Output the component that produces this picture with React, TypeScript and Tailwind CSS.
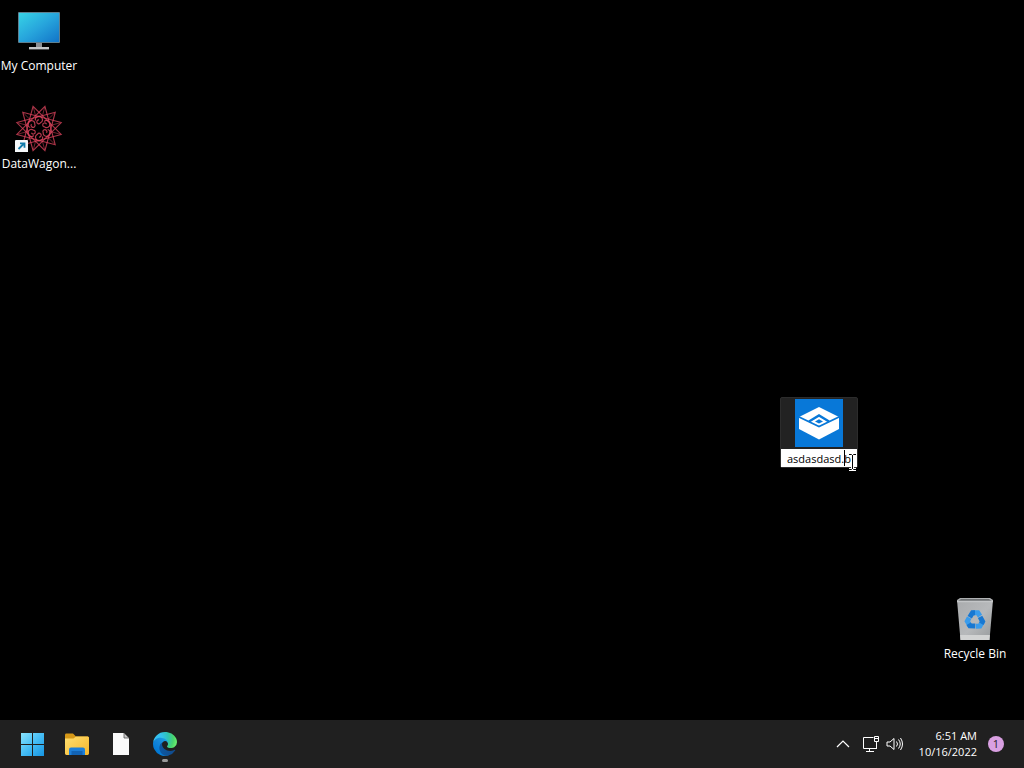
import React from "react";

function ComputerIcon() {
  return (
    <svg viewBox="0 0 48 48" className="size-12" aria-hidden="true">
      <defs>
        <linearGradient id="screen" x1="0" y1="0" x2="1" y2="1">
          <stop offset="0" stopColor="#37d3e6" />
          <stop offset="0.5" stopColor="#27a5dc" />
          <stop offset="1" stopColor="#1274c8" />
        </linearGradient>
      </defs>
      <path d="M21 37h6v5h-6z" fill="#8b8e92" />
      <path d="M14 41h20v2.4H14z" fill="#c3c5c7" />
      <rect x="3" y="6" width="42" height="31" rx="1" fill="#5f7f8f" />
      <rect x="4" y="7" width="40" height="29" fill="url(#screen)" />
    </svg>
  );
}

const SPOKES = Array.from({ length: 12 }, (_, i) => i * 30);

function MandalaIcon() {
  return (
    <svg viewBox="0 0 48 48" className="size-12" aria-hidden="true">
      <g fill="none" stroke="#e0465f">
        {[15, 45, 75, 105].map((a) => (
          <path
            key={a}
            d="M24 1.500 43.900 36H4.100z"
            transform={`rotate(${a} 24 24.500)`}
            strokeWidth="1.1"
            opacity="0.75"
          />
        ))}
        {SPOKES.map((a) => (
          <path key={a} d="M24 2.500V13" transform={`rotate(${a + 15} 24 24.500)`} strokeWidth="0.9" opacity="0.5" />
        ))}
        {SPOKES.filter((a) => a % 60 === 0).map((a) => (
          <g key={a} transform={`rotate(${a} 24 24.500)`} opacity="0.8">
            <path d="M20.500 16.500a3.500 3.500 0 1 1 5 2.300a2 2 0 1 1-1.500-3" strokeWidth="1.200" />
          </g>
        ))}
      </g>
      <rect x="0" y="36" width="13" height="13" rx="1" fill="#f5f8fa" />
      <path d="M3.5 45 9 39.5M5 39.3h4.500v4.500" fill="none" stroke="#127cab" strokeWidth="1.8" />
    </svg>
  );
}

function SandboxIcon() {
  return (
    <svg viewBox="0 0 48 48" className="size-12" aria-hidden="true">
      <path d="M0 0h48v48H0z" fill="#0878d8" />
      <path d="M24 8 44 18v12L24 40.500 4 30V18z" fill="#fff" />
      <path d="M3 17.500 24 27.500 45 17.500" fill="none" stroke="#0878d8" strokeWidth="1.800" />
      <path d="M14 22.500 24 16.500l10 6" fill="none" stroke="#0878d8" strokeWidth="2.400" />
      <path d="M24 18.700 31 22.500 24 26 17 22.500z" fill="#fff" />
      <path d="M24 20.300 28 22.500 24 24.600 20 22.500z" fill="#0878d8" />
    </svg>
  );
}

function RecycleIcon() {
  return (
    <svg viewBox="0 0 48 48" className="size-12" aria-hidden="true">
      <defs>
        <linearGradient id="bin" x1="0" y1="0" x2="1" y2="1">
          <stop offset="0" stopColor="#a9abad" />
          <stop offset="0.55" stopColor="#b7b9bb" />
          <stop offset="1" stopColor="#96999b" />
        </linearGradient>
      </defs>
      <path d="M6 6 9 4h30l3 2-3.5 40h-29z" fill="url(#bin)" />
      <path d="M6.8 7.2 10 5h28l3.2 2.2z" fill="#6f7274" />
      <path d="M6 6.8h36v1.400H6z" fill="#c4c6c8" />
      <path d="M9.1 41h29.8l-.4 5h-29z" fill="#d2d3d3" />
      <g transform="translate(24 26)" fill="none" strokeWidth="5">
        {[0, 120, 240].map((a) => (
          <g key={a} transform={`rotate(${a})`}>
            <path d="M-2.500-7.300H2.800L5-3.800" stroke="#3a9cec" />
            <path d="M-5.300-2.800-2.500-7.300H0" stroke="#1878d2" />
          </g>
        ))}
      </g>
    </svg>
  );
}

function StartIcon() {
  return (
    <svg viewBox="0 0 24 24" className="size-6" aria-hidden="true">
      <defs>
        <linearGradient id="start" gradientUnits="userSpaceOnUse" x1="0" y1="0" x2="24" y2="24">
          <stop offset="0" stopColor="#8ce6ff" />
          <stop offset="0.5" stopColor="#45bdf5" />
          <stop offset="1" stopColor="#1493e2" />
        </linearGradient>
      </defs>
      <path d="M0 1h11v11H0zM12 1h11v11H12zM0 13h11v11H0zM12 13h11v11H12z" fill="url(#start)" />
    </svg>
  );
}

function FolderIcon() {
  return (
    <svg viewBox="0 0 26 26" className="size-6.5" aria-hidden="true">
      <defs>
        <linearGradient id="folder" x1="0" y1="0" x2="1" y2="1">
          <stop offset="0" stopColor="#ffdf70" />
          <stop offset="1" stopColor="#f6b62b" />
        </linearGradient>
      </defs>
      <path d="M1 4a1.4 1.4 0 0 1 1.4-1.4H9L12 5.5h11.5A1.4 1.4 0 0 1 25 7v5H1z" fill="#d69817" />
      <path d="M1 7.500h8.500L12 5.500h11.600A1.4 1.4 0 0 1 25 7v15.600a1.4 1.4 0 0 1-1.4 1.4H2.400A1.4 1.4 0 0 1 1 22.600z" fill="url(#folder)" />
      <path d="M5 24v-5.500a2 2 0 0 1 2-2h12a2 2 0 0 1 2 2V24z" fill="#1d7fd8" />
      <path d="M7.500 20h11v4h-11z" fill="#1263b4" />
    </svg>
  );
}

function PageIcon() {
  return (
    <svg viewBox="0 0 24 24" className="size-6" aria-hidden="true">
      <path d="M4 1h11l5 5v17H4z" fill="#fafafa" />
      <path d="M15 1v5h5z" fill="#c9c9c9" stroke="#555" strokeWidth="0.8" />
    </svg>
  );
}

function EdgeIcon() {
  return (
    <svg viewBox="0 0 256 256" className="size-6" aria-hidden="true">
      <defs>
        <linearGradient id="edge-a" x1="63" y1="178" x2="241" y2="178" gradientUnits="userSpaceOnUse">
          <stop offset="0" stopColor="#0c59a4" />
          <stop offset="1" stopColor="#114a8b" />
        </linearGradient>
        <linearGradient id="edge-b" x1="158" y1="100" x2="46" y2="222" gradientUnits="userSpaceOnUse">
          <stop offset="0" stopColor="#1b9de2" />
          <stop offset="0.45" stopColor="#1586d8" />
          <stop offset="1" stopColor="#0078d4" />
        </linearGradient>
        <radialGradient id="edge-c" cx="30" cy="68" r="225" gradientUnits="userSpaceOnUse">
          <stop offset="0" stopColor="#35c1f1" />
          <stop offset="0.3" stopColor="#34c1ed" />
          <stop offset="0.6" stopColor="#2fc2b5" />
          <stop offset="0.85" stopColor="#47d36e" />
          <stop offset="1" stopColor="#66eb6e" />
        </radialGradient>
      </defs>
      <g transform="translate(-4.63 -4.92)">
        <path fill="url(#edge-a)" d="M235.68 195.46a93.73 93.73 0 0 1-10.54 4.71 101.87 101.87 0 0 1-35.9 6.46c-47.32 0-88.54-32.55-88.54-74.32A31.48 31.48 0 0 1 117.13 105c-42.8 1.8-53.8 46.4-53.8 72.53 0 73.88 68.09 81.37 82.76 81.37 7.91 0 19.84-2.3 27-4.56l1.31-.44a128.34 128.34 0 0 0 66.6-52.8 4 4 0 0 0-5.32-5.64z" />
        <path fill="url(#edge-b)" d="M110.34 246.34A79.2 79.2 0 0 1 87.6 225a80.72 80.72 0 0 1 29.53-120c3.12-1.47 8.45-4.13 15.54-4a32.35 32.35 0 0 1 25.69 13 31.88 31.88 0 0 1 6.36 18.66c0-.21 24.46-79.6-80-79.6-43.9 0-80 41.66-80 78.21a130.15 130.15 0 0 0 12.11 56 128 128 0 0 0 156.38 67.11 75.55 75.55 0 0 1-62.78-8z" />
        <path fill="url(#edge-c)" d="M156.94 153.78c-.81 1.05-3.3 2.5-3.3 5.66 0 2.61 1.7 5.12 4.72 7.23 14.38 10 41.49 8.68 41.56 8.68a59.56 59.56 0 0 0 30.27-8.35 61.38 61.38 0 0 0 30.43-52.88c.26-22.41-8-37.31-11.34-43.91C228.09 28.76 182.35 4.92 132.61 4.92a128 128 0 0 0-128 126.2c.48-36.54 36.8-66.05 80-66.05 3.5 0 23.46.34 42 10.07 16.34 8.58 24.9 18.94 30.85 29.21 6.18 10.67 7.28 24.15 7.28 29.52s-2.74 13.33-7.8 19.91z" />
      </g>
    </svg>
  );
}

function DesktopIcon({ label, place, children }: { label: string; place: string; children: React.ReactNode }) {
  return (
    <button type="button" className={`absolute flex w-[78px] flex-col items-center pt-0.5 text-xs text-white ${place}`}>
      {children}
      <span className="mt-1 whitespace-nowrap leading-4">{label}</span>
    </button>
  );
}

function TaskButton({ label, running, children }: { label: string; running?: boolean; children: React.ReactNode }) {
  return (
    <button type="button" aria-label={label} className="relative flex h-12 w-11 items-center justify-center">
      {children}
      {running && <span className="absolute bottom-1.5 h-[3px] w-1.5 rounded-full bg-[#9a9a9a]" />}
    </button>
  );
}

export default function App() {
  const [name, setName] = React.useState("asdasdasd.b");
  return (
    <div className="flex min-h-screen flex-col overflow-hidden bg-black font-['Open_Sans','Noto_Sans',sans-serif]">
      <main className="relative flex-1">
        <DesktopIcon label="My Computer" place="left-0 top-1">
          <ComputerIcon />
        </DesktopIcon>
        <DesktopIcon label="DataWagon..." place="left-0 top-[102px]">
          <MandalaIcon />
        </DesktopIcon>
        <div className="absolute left-[780px] top-[397px] flex w-[78px] flex-col items-center rounded-xs border border-[#2c2c2c] bg-[#222] pt-px">
          <SandboxIcon />
          <input
            aria-label="File name"
            value={name}
            onChange={(e) => setName(e.target.value)}
            className="mt-0.5 h-[18px] w-full bg-white pl-1.5 text-[11px] text-black outline-none"
          />
          <span className="absolute bottom-px left-[63px] h-4 w-px bg-black" />
          <svg viewBox="0 0 9 18" className="absolute -bottom-1 left-[67px] h-[18px] w-[9px]" aria-hidden="true">
            <path d="M1 1.500h2.500l1 1 1-1H8M4.500 2v14M1 16.500h2.500l1-1 1 1H8" fill="none" stroke="#fff" strokeWidth="3" />
            <path d="M1 1.500h2.500l1 1 1-1H8M4.500 2v14M1 16.500h2.500l1-1 1 1H8" fill="none" stroke="#000" />
          </svg>
        </div>
        <DesktopIcon label="Recycle Bin" place="bottom-[58px] right-[10px]">
          <RecycleIcon />
        </DesktopIcon>
      </main>

      <footer className="flex h-12 items-center justify-between bg-[#202020] pl-[11px] pr-5 text-white">
        <nav aria-label="Taskbar" className="flex">
          <TaskButton label="Start"><StartIcon /></TaskButton>
          <TaskButton label="File Explorer"><FolderIcon /></TaskButton>
          <TaskButton label="Document"><PageIcon /></TaskButton>
          <TaskButton label="Microsoft Edge" running><EdgeIcon /></TaskButton>
        </nav>
        <div className="flex items-center">
          <button type="button" aria-label="Show hidden icons" className="mr-[11px]">
            <svg viewBox="0 0 16 16" className="size-4" fill="none" stroke="#fff" strokeWidth="1.2" aria-hidden="true">
              <path d="M2 11l6-6 6 6" />
            </svg>
          </button>
          <button type="button" aria-label="Network and volume" className="mr-3.5 flex gap-1.5">
            <svg viewBox="0 0 18 18" className="size-[18px]" fill="none" stroke="#fff" aria-hidden="true">
              <path d="M11.500 2.500H1.500v11h13.500M14.500 6.500v7M7.500 13.500v3M4 16.500h8" />
              <path d="M12.500 1.500h4v5h-4zM12.500 3.500h4" />
            </svg>
            <svg viewBox="0 0 18 18" className="size-[18px]" fill="none" stroke="#fff" strokeLinejoin="round" aria-hidden="true">
              <path d="M1 7h3l4-3.500v11L4 11H1zM10.500 6.500q2 2.500 0 5M12.500 4.500q3.500 4.500 0 9M14.500 3q4 6 0 12" />
            </svg>
          </button>
          <time dateTime="2022-10-16T06:51" className="mr-[11px] w-[59px] text-right text-[11px] leading-4">
            6:51 AM
            <br />
            10/16/2022
          </time>
          <span className="flex size-4 items-center justify-center rounded-full bg-[#d9a0e2] text-[11px] leading-4 text-[#251d29]">1</span>
        </div>
      </footer>
    </div>
  );
}
